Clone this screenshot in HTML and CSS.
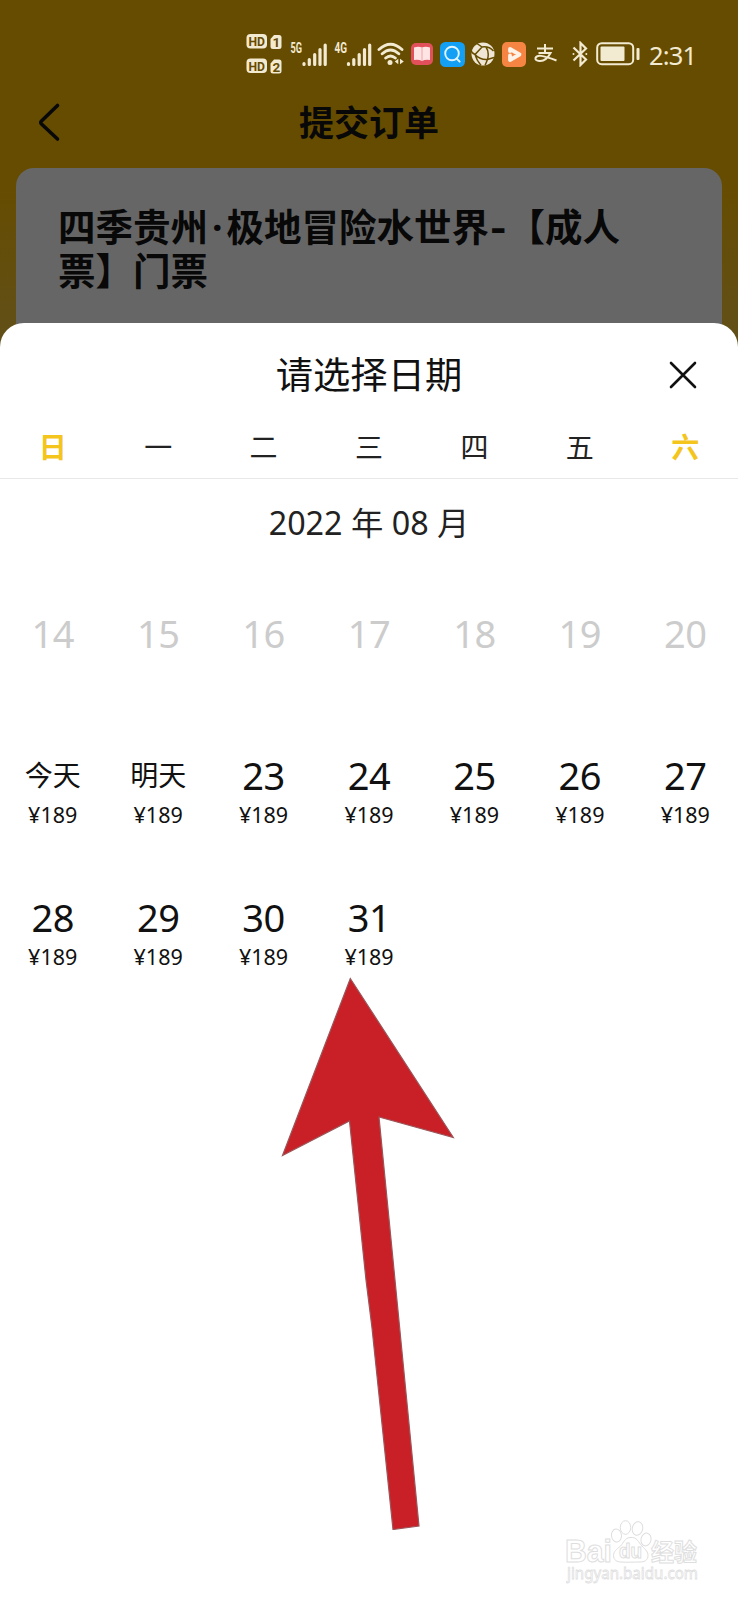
FILE: index.html
```html
<!DOCTYPE html>
<html lang="zh-CN">
  <head>
    <meta charset="UTF-8" />
    <meta name="viewport" content="width=device-width, initial-scale=1.0" />
    <title>提交订单</title>
    <link rel="stylesheet" href="styles.css">
  </head>
  <body>
    <div class="order-page">
      <div class="status-bar">
        <svg class="sims" width="36" height="42" viewBox="0 0 36 42">
          <rect x="0.5" y="1" width="20.5" height="14.5" rx="4" />
          <path d="M28 2h5a2.500 2.500 0 0 1 2.500 2.500v9a2.500 2.500 0 0 1-2.500 2.500h-6a2.500 2.500 0 0 1-2.500-2.500V6z" />
          <rect x="0.500" y="25.500" width="20.500" height="14.500" rx="4" />
          <path d="M28 26.500h5a2.500 2.500 0 0 1 2.500 2.500v9a2.500 2.500 0 0 1-2.500 2.500h-6a2.500 2.500 0 0 1-2.500-2.500V30.500z" />
          <g class="sim-text">
            <text x="2.500" y="13" textLength="16.500" lengthAdjust="spacingAndGlyphs">HD</text>
            <text x="26.500" y="14">1</text>
            <text x="2.500" y="37.500" textLength="16.500" lengthAdjust="spacingAndGlyphs">HD</text>
            <text x="26.500" y="38.500">2</text>
          </g>
        </svg>
        <svg class="signal" width="38" height="26" viewBox="0 0 38 26">
          <text x="0.500" y="12" textLength="11.500" lengthAdjust="spacingAndGlyphs">5G</text>
          <path d="M14 22.500v1M19.300 18.500v5M24.700 13.500v10M30 8.500v15M35.200 4v19.500" />
        </svg>
        <svg class="signal" width="38" height="26" viewBox="0 0 38 26">
          <text x="0.500" y="12" textLength="12.500" lengthAdjust="spacingAndGlyphs">4G</text>
          <path d="M14.500 22.500v1M19.800 18.500v5M25.200 13.500v10M30.500 8.500v15M35.700 4v19.500" />
        </svg>
        <svg class="wifi" width="28" height="26" viewBox="0 0 28 26">
          <path class="wave" d="M2 8.500Q13.500-2 25 8.500M5.200 12.800Q13.500 5.200 21.800 12.800M8.700 17Q13.500 12.800 18.300 17" />
          <circle cx="13" cy="21.500" r="2.500" />
          <path d="M17.800 20.500l3.500-2.800v5.600zM23 17.700v5.600l3.800-2.800z" />
        </svg>
        <svg class="app-red" width="22" height="24" viewBox="0 0 22 24">
          <rect y="1" width="22" height="22" rx="5" fill="#e2505c" />
          <path d="M3 5.500q4.500-1.500 8 0q3.500-1.500 8 0v12.500q-4.500-1-8 1q-3.500-2-8-1z" fill="#ffe4e4" />
          <path d="M11 6v13" stroke="#eea3aa" />
        </svg>
        <svg class="app-blue" width="25" height="25" viewBox="0 0 25 25">
          <rect width="25" height="25" rx="5.500" fill="#13a0f4" />
          <circle cx="12" cy="11.500" r="6.800" fill="none" stroke="#e0f4ff" stroke-width="1.900" />
          <path d="M16.500 16.500l3.200 3.200" stroke="#e0f4ff" stroke-width="1.900" stroke-linecap="round" />
        </svg>
        <svg class="app-globe" width="24" height="24" viewBox="0 0 24 24">
          <circle cx="12" cy="12" r="11.500" fill="#efe6d5" />
          <path d="M6 1.500L11 5Q18 4 22.500 9M11 5L4 12.500Q.5 11 0 8M4 12.500Q5.500 18 10 23.500M4 12.500Q9 18 16.500 17.500Q18.500 10 15 5M16.500 17.500L14 23.500M16.500 17.500L23 15.500" fill="none" stroke="#664c00" stroke-width="1.500" />
        </svg>
        <svg class="app-play" width="24" height="25" viewBox="0 0 24 25">
          <rect width="24" height="25" rx="5" fill="#f68543" />
          <path d="M8 9V7L17.500 12.500L8 18v-4.500" fill="none" stroke="#fff2e6" stroke-width="3.800" stroke-linejoin="round" stroke-linecap="round" />
        </svg>
        <svg class="pay" width="24" height="22" viewBox="0 0 24 22">
          <path d="M3 5.500h16M11 1v8.500M4.500 10h12Q12 18.500 5.500 18Q.8 17.500 1.500 15C3 11.500 8 12 22.500 17.500" />
        </svg>
        <svg class="bluetooth" width="16" height="26" viewBox="0 0 16 26">
          <path d="M1.500 6.500L14 18.500L8.500 24V2L14 7.500L1.500 19.500" />
          <circle cx="14.300" cy="13" r="1" /><circle cx="1.500" cy="13" r="1" />
        </svg>
        <svg class="battery" width="45" height="24" viewBox="0 0 45 24">
          <rect class="shell" x="1.200" y="1.200" width="36" height="21" rx="4.500" />
          <rect x="4.500" y="4.500" width="24" height="14.500" rx="1" />
          <rect x="40.500" y="6" width="3" height="12" rx="1" />
        </svg>
        <span class="clock">2:31</span>
      </div>

      <div class="nav-bar">
        <svg class="back" width="24" height="40" viewBox="0 0 24 40">
          <path d="M20.500 3.500L4.500 19q-1.500 1.500 0 3L20.500 37" />
        </svg>
        <h1>提交订单</h1>
      </div>

      <div class="ticket-card">
        <h2>四季贵州<span class="half">·</span>极地冒险水世界<span class="half dash">-</span>【成人<br />票】门票</h2>
      </div>
    </div>

    <div class="date-sheet">
      <div class="sheet-header">
        <h3>请选择日期</h3>
        <svg class="close" width="28" height="28" viewBox="0 0 28 28">
          <path d="M2 2l24 24M26 2L2 26" />
        </svg>
      </div>

      <div class="week-row">
        <span class="weekend">日</span>
        <span>一</span>
        <span>二</span>
        <span>三</span>
        <span>四</span>
        <span>五</span>
        <span class="weekend">六</span>
      </div>

      <div class="month">2022 年 08 月</div>

      <div class="days">
        <div class="day past"><b>14</b></div>
        <div class="day past"><b>15</b></div>
        <div class="day past"><b>16</b></div>
        <div class="day past"><b>17</b></div>
        <div class="day past"><b>18</b></div>
        <div class="day past"><b>19</b></div>
        <div class="day past"><b>20</b></div>

        <div class="day near"><b>今天</b><small>¥189</small></div>
        <div class="day near"><b>明天</b><small>¥189</small></div>
        <div class="day"><b>23</b><small>¥189</small></div>
        <div class="day"><b>24</b><small>¥189</small></div>
        <div class="day"><b>25</b><small>¥189</small></div>
        <div class="day"><b>26</b><small>¥189</small></div>
        <div class="day"><b>27</b><small>¥189</small></div>

        <div class="day"><b>28</b><small>¥189</small></div>
        <div class="day"><b>29</b><small>¥189</small></div>
        <div class="day"><b>30</b><small>¥189</small></div>
        <div class="day"><b>31</b><small>¥189</small></div>
      </div>
    </div>

    <!-- pointer over the sheet -->
    <svg class="arrow" width="180" height="560" viewBox="0 0 180 560">
      <path d="M75.300 8.500L178.300 167.500L104 147L120 310L144 556L118 559.500L97 358L91 310L74.500 151L7.500 185.500Z" />
    </svg>

    <svg class="watermark" width="150" height="80" viewBox="0 0 150 80">
      <g class="paw">
        <ellipse cx="50.500" cy="15.500" rx="5" ry="6.500" transform="rotate(-8 50.500 15.500)" />
        <ellipse cx="59.500" cy="7.500" rx="5.200" ry="6.800" />
        <ellipse cx="71.500" cy="8.500" rx="5.200" ry="6.800" transform="rotate(12 71.500 8.500)" />
        <ellipse cx="80" cy="19.500" rx="5" ry="6.500" transform="rotate(12 80 19.500)" />
        <path d="M64 17.500c7-1 8.500 5 12 8.500c4 4 6 6 6 9.500c0 5-4 6.500-8 6.500c-6 0-13 .5-19 0c-4 0-7.500-2-7.500-6.500c0-4 3-6 7-9.500c3.500-3.500 4-8 9.500-8.500z" />
      </g>
      <text class="brand" x="-1" y="42" textLength="47" lengthAdjust="spacingAndGlyphs">Bai</text>
      <text class="du" x="53" y="38" textLength="23" lengthAdjust="spacingAndGlyphs">du</text>
      <text class="jingyan" x="85" y="41" textLength="46" lengthAdjust="spacingAndGlyphs">经验</text>
      <text class="site" x="1" y="59" textLength="131" lengthAdjust="spacingAndGlyphs">jingyan.baidu.com</text>
    </svg>
  </body>
</html>
```
FILE: styles.css
```css
* {
  box-sizing: border-box;
}
body {
  position: relative;
  margin: 0;
  width: 738px;
  height: 1600px;
  overflow: hidden;
  background: #fff;
  color: #111;
  font-family: "Noto Sans", "Noto Sans CJK SC", sans-serif;
}
h1,
h2,
h3 {
  margin: 0;
}
svg {
  display: block;
  flex: none;
}

/* dimmed page behind the sheet */
.order-page {
  height: 352px;
  background: linear-gradient(#664c00 0, #664c00 180px, #61501a 352px);
}
.status-bar {
  display: flex;
  align-items: center;
  height: 88px;
  padding: 20px 0 0 246px;
  fill: #f3ead2;
}
.sim-text {
  fill: #664c00;
  font: bold 13.5px Roboto, sans-serif;
}
.signal {
  margin-left: 8px;
}
.signal + .signal {
  margin-left: 6px;
}
.signal text {
  font: bold 14px Roboto, sans-serif;
}
.signal path {
  stroke: #f3ead2;
  stroke-width: 3.2;
  stroke-linecap: round;
}
.wifi {
  margin-left: 5px;
}
.wifi .wave {
  fill: none;
  stroke: #f3ead2;
  stroke-width: 2.9;
  stroke-linecap: round;
}
.app-red {
  margin-left: 6px;
}
.app-blue {
  margin-left: 7px;
}
.app-globe {
  margin-left: 6px;
}
.app-play {
  margin-left: 7px;
}
.pay {
  margin-left: 8px;
  fill: none;
  stroke: #f3ead2;
  stroke-width: 2;
}
.bluetooth {
  margin-left: 14px;
}
.bluetooth path {
  fill: none;
  stroke: #f3ead2;
  stroke-width: 2.2;
}
.battery {
  margin-left: 8px;
}
.battery .shell {
  fill: none;
  stroke: #f3ead2;
  stroke-width: 2;
}
.clock {
  margin-left: 8px;
  padding-top: 1px;
  color: #f3ead2;
  font-size: 25.5px;
  line-height: 30px;
  letter-spacing: -0.8px;
}
.nav-bar {
  display: grid;
  grid-template-columns: 80px 1fr 80px;
  align-items: center;
  height: 68px;
}
.back {
  margin-left: 37px;
}
.back path {
  fill: none;
  stroke: #080808;
  stroke-width: 3.6;
  stroke-linecap: round;
}
.nav-bar h1 {
  padding-top: 2px;
  color: #080808;
  font-size: 35px;
  line-height: 40px;
  text-align: center;
}
.ticket-card {
  height: 184px;
  margin: 12px 16px 0;
  padding: 37px 42px 0;
  border-radius: 18px 18px 0 0;
  background: #666;
}
.ticket-card h2 {
  color: #080808;
  font-size: 37.5px;
  line-height: 43.5px;
  white-space: nowrap;
}
.half {
  display: inline-block;
  width: 18.5px;
  text-align: center;
}
.dash {
  transform: scaleX(1.25);
}

/* date picker */
.date-sheet {
  position: relative;
  height: 1277px;
  margin-top: -29px;
  border-radius: 24px 24px 0 0;
  background: #fff;
}
.sheet-header {
  display: grid;
  grid-template-columns: 80px 1fr 80px;
  align-items: center;
  height: 102px;
  padding-top: 2px;
}
.sheet-header h3 {
  grid-column: 2;
  font-size: 37.3px;
  font-weight: normal;
  line-height: 44px;
  text-align: center;
}
.close {
  margin-left: 11px;
}
.close path {
  stroke: #111;
  stroke-width: 2.6;
  stroke-linecap: round;
}
.week-row {
  display: grid;
  grid-template-columns: repeat(7, 1fr);
  height: 54px;
  border-bottom: 1px solid #e8e8e8;
  color: #222;
  font-size: 28px;
  line-height: 44px;
  text-align: center;
}
.weekend {
  color: #f4c51c;
  font-weight: bold;
}
.month {
  padding-top: 21px;
  height: 107px;
  color: #222;
  font-size: 32.3px;
  line-height: 44px;
  text-align: center;
}
.days {
  display: grid;
  grid-template-columns: repeat(7, 1fr);
  grid-auto-rows: 142px;
}
.day {
  display: flex;
  flex-direction: column;
  align-items: center;
  padding-top: 24px;
}
.day b {
  height: 47px;
  font-size: 38px;
  font-weight: normal;
  line-height: 46px;
  letter-spacing: -0.5px;
}
.day small {
  height: 32px;
  font-size: 21.5px;
  line-height: 32px;
}
.past {
  color: #ccc;
}
.near b {
  font-size: 28px;
  letter-spacing: 0;
}

.arrow {
  position: absolute;
  left: 275px;
  top: 970px;
}
.arrow path {
  fill: #c91f27;
  stroke: #9b5558;
  stroke-width: 1.2;
}
.watermark {
  position: absolute;
  left: 566px;
  top: 1520px;
  fill: #fff;
  stroke: #dedede;
  stroke-width: 1;
}
.brand {
  font: bold 31px "Liberation Sans", sans-serif;
}
.du {
  font: bold 20px "Liberation Sans", sans-serif;
}
.jingyan {
  font: bold 24px "Noto Sans CJK SC", sans-serif;
}
.site {
  font: 17px "Noto Sans", sans-serif;
  stroke-width: 0.8;
}
```
